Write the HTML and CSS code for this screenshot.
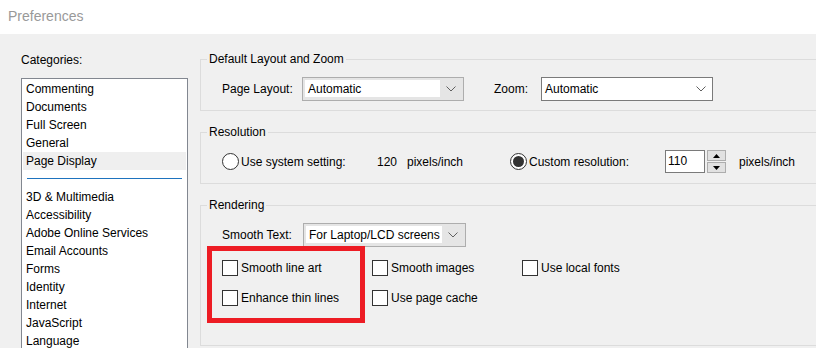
FILE: index.html
```html
<!DOCTYPE html>
<html lang="en">
<head>
    <meta charset="UTF-8">
    <title>Preferences</title>
    <link rel="stylesheet" href="styles.css">
</head>
<body>
    <div class="titlebar">Preferences</div>

    <div class="window">
        <!-- Left column: category list -->
        <div class="categories">
            <div class="cat-label">Categories:</div>
            <ul class="cat-list">
                <li>Commenting</li>
                <li>Documents</li>
                <li>Full Screen</li>
                <li>General</li>
                <li class="selected">Page Display</li>
                <li class="sep"></li>
                <li>3D &amp; Multimedia</li>
                <li>Accessibility</li>
                <li>Adobe Online Services</li>
                <li>Email Accounts</li>
                <li>Forms</li>
                <li>Identity</li>
                <li>Internet</li>
                <li>JavaScript</li>
                <li>Language</li>
            </ul>
        </div>

        <!-- Right column: page display settings -->
        <div class="settings">
            <fieldset class="group">
                <legend>Default Layout and Zoom</legend>
                <div class="group-body body-layout">
                    <div class="row">
                        <span class="label label-layout">Page Layout:</span>
                        <div class="combo combo-layout">
                            <div class="combo-field">Automatic</div>
                            <div class="combo-arrow">
                                <svg width="10" height="6" viewBox="0 0 10 6"><polyline points="0.5,0.5 5,5 9.5,0.5" fill="none" stroke="#606060" stroke-width="1"/></svg>
                            </div>
                        </div>
                        <span class="label label-zoom">Zoom:</span>
                        <div class="combo-edit">
                            <div class="combo-text">Automatic</div>
                            <div class="combo-arrow">
                                <svg width="10" height="6" viewBox="0 0 10 6"><polyline points="0.5,0.5 5,5 9.5,0.5" fill="none" stroke="#606060" stroke-width="1"/></svg>
                            </div>
                        </div>
                    </div>
                </div>
            </fieldset>

            <fieldset class="group">
                <legend>Resolution</legend>
                <div class="group-body body-resolution">
                    <div class="row">
                        <label class="option opt-system">
                            <span class="radio"></span>
                            Use system setting:
                        </label>
                        <span class="value">120</span>
                        <span class="unit unit-system">pixels/inch</span>
                        <label class="option opt-custom">
                            <span class="radio checked"></span>
                            Custom resolution:
                        </label>
                        <div class="number-field">110</div>
                        <div class="spinner">
                            <div class="spin-btn">
                                <svg width="7" height="4" viewBox="0 0 7 4"><polygon points="3.5,0 7,4 0,4" fill="#000"/></svg>
                            </div>
                            <div class="spin-btn">
                                <svg width="7" height="4" viewBox="0 0 7 4"><polygon points="0,0 7,0 3.5,4" fill="#000"/></svg>
                            </div>
                        </div>
                        <span class="unit unit-custom">pixels/inch</span>
                    </div>
                </div>
            </fieldset>

            <fieldset class="group">
                <legend>Rendering</legend>
                <div class="group-body body-rendering">
                    <div class="row">
                        <span class="label label-smooth">Smooth Text:</span>
                        <div class="combo combo-smooth">
                            <div class="combo-field">For Laptop/LCD screens</div>
                            <div class="combo-arrow">
                                <svg width="10" height="6" viewBox="0 0 10 6"><polyline points="0.5,0.5 5,5 9.5,0.5" fill="none" stroke="#606060" stroke-width="1"/></svg>
                            </div>
                        </div>
                    </div>

                    <div class="check-grid">
                        <label class="option"><span class="checkbox"></span>Smooth line art</label>
                        <label class="option"><span class="checkbox"></span>Smooth images</label>
                        <label class="option"><span class="checkbox"></span>Use local fonts</label>
                        <label class="option"><span class="checkbox"></span>Enhance thin lines</label>
                        <label class="option"><span class="checkbox"></span>Use page cache</label>

                        <!-- annotation drawn over the first column -->
                        <div class="highlight"></div>
                    </div>
                </div>
            </fieldset>
        </div>
    </div>
</body>
</html>
```

FILE: styles.css
```css
* {
    margin: 0;
    padding: 0;
    box-sizing: border-box;
}

html, body {
    height: 348px;
    overflow: hidden;
}

body {
    font-family: 'Liberation Sans', Arial, sans-serif;
    font-size: 12px;
    color: #000;
    background: #f0f0f0;
}

.titlebar {
    height: 34px;
    background: #fff;
    color: #999;
    font-size: 14px;
    line-height: 20px;
    padding: 6px 8px;
}

.window {
    display: flex;
    height: 314px;
    overflow: hidden;
}

/* Categories */

.categories {
    width: 188px;
    flex-shrink: 0;
    padding: 17px 0 0 21px;
}

.cat-label {
    line-height: 18px;
    margin-bottom: 9px;
}

.cat-list {
    list-style: none;
    width: 167px;
    height: 300px;
    background: #fff;
    border: 1px solid #828790;
    padding: 1px;
    overflow: hidden;
}

.cat-list li {
    height: 18px;
    line-height: 18px;
    padding-left: 3px;
    white-space: nowrap;
}

.cat-list li.selected {
    background: #efefef;
}

.cat-list li.sep {
    padding: 8px 4px 0;
}

.cat-list li.sep::after {
    content: "";
    display: block;
    height: 1px;
    background: #1e73be;
}

/* Group boxes */

.settings {
    width: 640px;
    flex-shrink: 0;
    margin-left: 12px;
    padding-top: 16px;
}

.group {
    border: 1px solid #dcdcdc;
    padding: 0;
    margin-bottom: 12px;
}

.group legend {
    margin-left: 6px;
    padding: 0 2px;
    line-height: 19px;
}

.group-body {
    padding-left: 21px;
}

.body-layout {
    padding-top: 8px;
    padding-bottom: 9px;
}

.body-resolution {
    padding-top: 8px;
    padding-bottom: 10px;
}

.body-rendering {
    padding-top: 8px;
    padding-bottom: 38px;
}

.row {
    display: flex;
    align-items: center;
    height: 24px;
}

.body-resolution .row {
    height: 23px;
}

.label {
    flex-shrink: 0;
}

.label-layout {
    width: 80px;
}

.label-zoom {
    width: 47px;
    margin-left: 30px;
}

.label-smooth {
    width: 81px;
}

/* Combo boxes */

.combo {
    display: flex;
    height: 24px;
    border: 1px solid #adadad;
    background: #e5e5e5;
    padding: 1px;
}

.combo-layout {
    width: 162px;
}

.combo-smooth {
    width: 163px;
}

.combo-field {
    flex: 1;
    background: #fff;
    margin: 1px 0 2px 1px;
    padding-left: 3px;
    line-height: 18px;
    white-space: nowrap;
    overflow: hidden;
}

.combo-arrow {
    width: 22px;
    display: flex;
    align-items: center;
    justify-content: center;
}

.combo-edit {
    display: flex;
    width: 172px;
    height: 24px;
    border: 1px solid #7a7a7a;
    background: #fff;
}

.combo-text {
    flex: 1;
    padding-left: 3px;
    line-height: 22px;
}

.combo-edit .combo-arrow {
    width: 20px;
    padding-right: 2px;
}

/* Radios, checkboxes */

.option {
    display: flex;
    align-items: center;
    white-space: nowrap;
}

.radio {
    width: 17px;
    height: 17px;
    border: 1px solid #333;
    border-radius: 50%;
    background: #fff;
    margin-right: 2px;
    display: flex;
    align-items: center;
    justify-content: center;
}

.radio.checked::after {
    content: "";
    width: 11px;
    height: 11px;
    border-radius: 50%;
    background: #333;
}

.opt-system,
.opt-custom {
    width: 155px;
}

.value {
    width: 30px;
}

.unit-system {
    width: 103px;
}

.number-field {
    width: 40px;
    height: 23px;
    border: 1px solid #7a7a7a;
    background: #fff;
    padding-left: 2px;
    line-height: 21px;
}

.spinner {
    width: 19px;
    height: 23px;
    margin-left: 2px;
    display: flex;
    flex-direction: column;
    gap: 1px;
}

.spin-btn {
    flex: 1;
    border: 1px solid #adadad;
    background: #e1e1e1;
    display: flex;
    align-items: center;
    justify-content: center;
}

.unit-custom {
    margin-left: 13px;
}

.check-grid {
    position: relative;
    display: grid;
    grid-template-columns: repeat(3, 150px);
    grid-auto-rows: 18px;
    row-gap: 12px;
    margin-top: 12px;
}

.checkbox {
    width: 16px;
    height: 16px;
    border: 1px solid #333;
    background: #fff;
    margin-right: 3px;
}

.highlight {
    position: absolute;
    left: -15px;
    top: -13px;
    width: 158px;
    height: 77px;
    border: 5px solid #ed1c24;
}
```
